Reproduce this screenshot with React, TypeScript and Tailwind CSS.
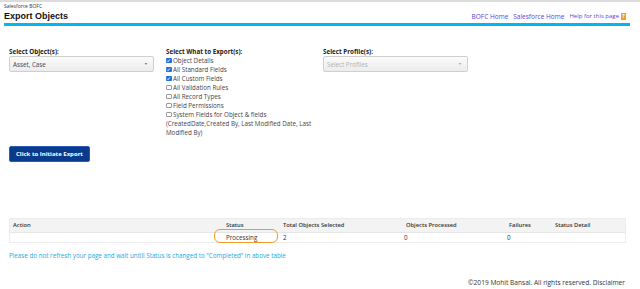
import React from 'react';

const options = [
  { label: 'Object Details', checked: true },
  { label: 'All Standard Fields', checked: true },
  { label: 'All Custom Fields', checked: true },
  { label: 'All Validation Rules', checked: false },
  { label: 'All Record Types', checked: false },
  { label: 'Field Permissions', checked: false },
  { label: 'System Fields for Object & fields', checked: false },
];

function Box({ checked }: { checked: boolean }) {
  if (checked) {
    return (
      <span className="mr-[1.5px] inline-flex h-[5.5px] w-[5.5px] items-center justify-center rounded-[1px] bg-[#1e6fd9]">
        <svg viewBox="0 0 10 10" className="h-[5px] w-[5px]">
          <path d="M2 5.2 L4.2 7.4 L8 2.8" fill="none" stroke="#fff" strokeWidth="1.8" />
        </svg>
      </span>
    );
  }
  return <span className="mr-[1.5px] inline-block h-[5.5px] w-[5.5px] rounded-[1px] border-[0.5px] border-[#9a9a9a] bg-white" />;
}

function Select({ text, muted }: { text: string; muted?: boolean }) {
  return (
    <div className="flex h-[16px] w-[145px] items-center justify-between rounded-[2px] border border-[#cfcfcf] bg-gradient-to-b from-[#fbfbfb] to-[#ececec] pl-[3px] pr-[5px]">
      <span className={muted ? 'text-[#b0b0b0]' : 'text-[#444]'}>{text}</span>
      <svg viewBox="0 0 6 4" className="h-[2px] w-[4px]">
        <path d="M0 0 L6 0 L3 4 Z" fill={muted ? '#b5b5b5' : '#888'} />
      </svg>
    </div>
  );
}

export default function App() {
  return (
    <div className="relative h-[289px] w-[640px] overflow-hidden bg-white text-[6.25px] leading-[9px] text-[#222]" style={{ fontFamily: '"Open Sans", sans-serif' }}>
      <div className="h-[2px] w-full bg-[#dcdcdc]" />

      {/* header */}
      <div className="flex items-end justify-between pl-[4px] pr-[14px] pt-[1px]">
        <div>
          <div className="text-[5px] leading-[7px] text-[#333]">Salesforce BOFC</div>
          <div className="text-[9px] font-bold leading-[12px] text-[#111]" style={{ fontFamily: '"Liberation Sans", Arial, sans-serif' }}>
            Export Objects
          </div>
        </div>
        <div className="mb-[1px] flex items-center gap-[5px] text-[#5b3fd6]">
          <span className="text-[6.5px]">BOFC Home</span>
          <span className="text-[6.5px]">Salesforce Home</span>
          <span className="flex items-center gap-[2px] text-[6px]">
            Help for this page
            <span className="inline-flex h-[7px] w-[5px] items-center justify-center bg-[#f0a020] text-[5px] font-bold leading-none text-white">?</span>
          </span>
        </div>
      </div>
      <div className="ml-[4px] mr-[10px] mt-[1px] h-[3px] bg-[#00b7f1]" />

      {/* selections */}
      <div className="mt-[21px] flex pl-[9px]">
        <div className="w-[157px]">
          <div className="font-bold text-[#222]">Select Object(s):</div>
          <Select text="Asset, Case" />
        </div>
        <div className="w-[157px]">
          <div className="font-bold text-[#222]">Select What to Export(s):</div>
          {options.map((o) => (
            <div key={o.label} className="flex items-center text-[#444]">
              <Box checked={o.checked} />
              {o.label}
            </div>
          ))}
          <div className="w-[150px] text-[#444]">(CreatedDate,Created By, Last Modified Date, Last Modified By)</div>
        </div>
        <div className="w-[157px]">
          <div className="font-bold text-[#222]">Select Profile(s):</div>
          <Select text="Select Profiles" muted />
        </div>
      </div>

      {/* button */}
      <div className="mt-[9px] pl-[9px]">
        <button className="h-[16px] w-[81px] rounded-[2px] border border-[#2a5bb0] bg-[#0a3a8c] text-[6px] font-bold text-white">
          Click to Initiate Export
        </button>
      </div>

      {/* table */}
      <div className="mx-[9px] mt-[56px] w-[617px] border border-[#ececec]">
        <div className="flex h-[13px] items-center bg-[#f3f3f3] text-[5.75px] font-semibold text-[#333]">
          <div className="w-[213px] pl-[3px]">Action</div>
          <div className="w-[57px] pl-[3px]">Status</div>
          <div className="w-[123px] pl-[3px]">Total Objects Selected</div>
          <div className="w-[103px] pl-[3px]">Objects Processed</div>
          <div className="w-[46px] pl-[3px]">Failures</div>
          <div className="pl-[3px]">Status Detail</div>
        </div>
        <div className="flex h-[10px] items-center border-t border-[#e6e6e6] text-[#333]">
          <div className="w-[213px]" />
          <div className="relative w-[57px] pl-[3px]">
            Processing
            <span className="absolute left-[-9px] top-[-4px] h-[14px] w-[64px] rounded-[6px] border-[1.5px] border-[#f09a2a]" />
          </div>
          <div className="w-[123px] pl-[3px]">2</div>
          <div className="w-[103px] pl-[1px]">0</div>
          <div className="w-[46px] pl-[1px]">0</div>
          <div />
        </div>
      </div>

      <div className="mt-[8px] pl-[9px] text-[#1aa9e6]">
        Please do not refresh your page and wait untill Status is changed to "Completed" in above table
      </div>

      <div className="mt-[18px] pr-[15px] text-right text-[6.6px] text-[#333]">
        ©2019 Mohit Bansal. All rights reserved. Disclaimer
      </div>
    </div>
  );
}
